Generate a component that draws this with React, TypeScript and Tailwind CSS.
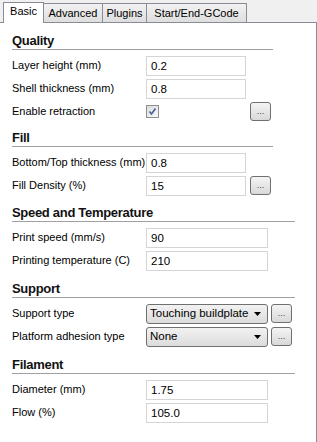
import React from 'react';

const font = { fontFamily: 'Tahoma, "Liberation Sans", Arial, sans-serif' };

const TABS = [
    { name: 'Basic', w: 'w-[41px]' },
    { name: 'Advanced', w: 'w-[59px]' },
    { name: 'Plugins', w: 'w-[44px]' },
    { name: 'Start/End-GCode', w: 'w-[100px]' },
];

const Heading = ({ title, line, mt }: { title: string; line: string; mt: string }) => (
    <div className={`${mt} mb-[4px]`}>
        <div className="text-[13px] font-bold leading-[16px] tracking-[-0.3px] text-[#111] pl-[12px]">{title}</div>
        <div className={`ml-[12px] h-px bg-[#a0a0a0] ${line}`} />
    </div>
);

const TextBox = ({ value, w }: { value: string; w: string }) => (
    <div className={`h-[20px] ${w} border border-[#d5d5d5] bg-white pl-[4px] text-[11.5px] leading-[18px] text-black`}>{value}</div>
);

const Dots = () => (
    <div className="h-[19px] w-[21px] rounded-[3px] border border-[#707070] bg-gradient-to-b from-[#f4f4f4] to-[#d9d9d9] flex items-center justify-center text-[9px] leading-none text-[#444]">
        ...
    </div>
);

const Select = ({ value }: { value: string }) => (
    <div className="h-[20px] w-[122px] rounded-[3px] border border-[#707070] bg-gradient-to-b from-[#f2f2f2] to-[#dcdcdc] flex items-center justify-between pl-[3px] pr-[6px] text-[11.5px] text-black whitespace-nowrap">
        <span>{value}</span>
        <svg width="7" height="4" viewBox="0 0 7 4"><path d="M0 0h7L3.5 4z" fill="#000" /></svg>
    </div>
);

const Row = ({ label, children, h = 'h-[23px]', gap = 'gap-[4px]' }: { label: string; children: React.ReactNode; h?: string; gap?: string }) => (
    <div className={`${h} flex items-center`}>
        <div className="w-[146px] pl-[12px] text-[11px] text-black whitespace-nowrap">{label}</div>
        <div className={`flex items-center ${gap}`}>{children}</div>
    </div>
);

export default function App() {
    return (
        <div className="w-[317px] h-[442px] bg-[#f0f0f0] flex flex-col overflow-hidden" style={font}>
            <div className="h-[22px] flex items-end pl-[3px] relative">
                {TABS.map((t, i) =>
                    i === 0 ? (
                        <div key={t.name} className={`${t.w} h-[21px] bg-white border border-b-0 border-[#898c95] text-[11px] leading-[17px] text-black text-center relative top-px z-10`}>
                            {t.name}
                        </div>
                    ) : (
                        <div key={t.name} className={`${t.w} h-[19px] bg-gradient-to-b from-[#f2f2f2] to-[#dedede] border border-l-0 border-b-0 border-[#898c95] text-[11px] leading-[18px] text-black text-center whitespace-nowrap`}>
                            {t.name}
                        </div>
                    )
                )}
            </div>
            <div className="flex-1 bg-white border-t border-r border-[#898c95] pt-px">
                <Heading title="Quality" line="w-[261px]" mt="mt-[9px]" />
                <Row label="Layer height (mm)"><TextBox value="0.2" w="w-[100px]" /></Row>
                <Row label="Shell thickness (mm)"><TextBox value="0.8" w="w-[100px]" /></Row>
                <Row label="Enable retraction" h="h-[22px]">
                    <div className="w-[100px]">
                        <div className="w-[13px] h-[13px] border border-[#8e8f8f] bg-gradient-to-br from-[#dcdcdc] to-[#f8f8f8] flex items-center justify-center">
                            <svg width="9" height="9" viewBox="0 0 9 9"><path d="M1.5 4.5l2 2.5L7.5 1.5" stroke="#4a5f97" strokeWidth="1.6" fill="none" /></svg>
                        </div>
                    </div>
                    <Dots />
                </Row>
                <Heading title="Fill" line="w-[261px]" mt="mt-[8px]" />
                <Row label="Bottom/Top thickness (mm)"><TextBox value="0.8" w="w-[100px]" /></Row>
                <Row label="Fill Density (%)"><TextBox value="15" w="w-[100px]" /><Dots /></Row>
                <Heading title="Speed and Temperature" line="w-[283px]" mt="mt-[8px]" />
                <Row label="Print speed (mm/s)"><TextBox value="90" w="w-[122px]" /></Row>
                <Row label="Printing temperature (C)"><TextBox value="210" w="w-[122px]" /></Row>
                <Heading title="Support" line="w-[283px]" mt="mt-[9px]" />
                <Row label="Support type" gap="gap-[3px]"><Select value="Touching buildplate" /><Dots /></Row>
                <Row label="Platform adhesion type" gap="gap-[3px]"><Select value="None" /><Dots /></Row>
                <Heading title="Filament" line="w-[283px]" mt="mt-[9px]" />
                <Row label="Diameter (mm)"><TextBox value="1.75" w="w-[122px]" /></Row>
                <Row label="Flow (%)"><TextBox value="105.0" w="w-[122px]" /></Row>
            </div>
        </div>
    );
}
